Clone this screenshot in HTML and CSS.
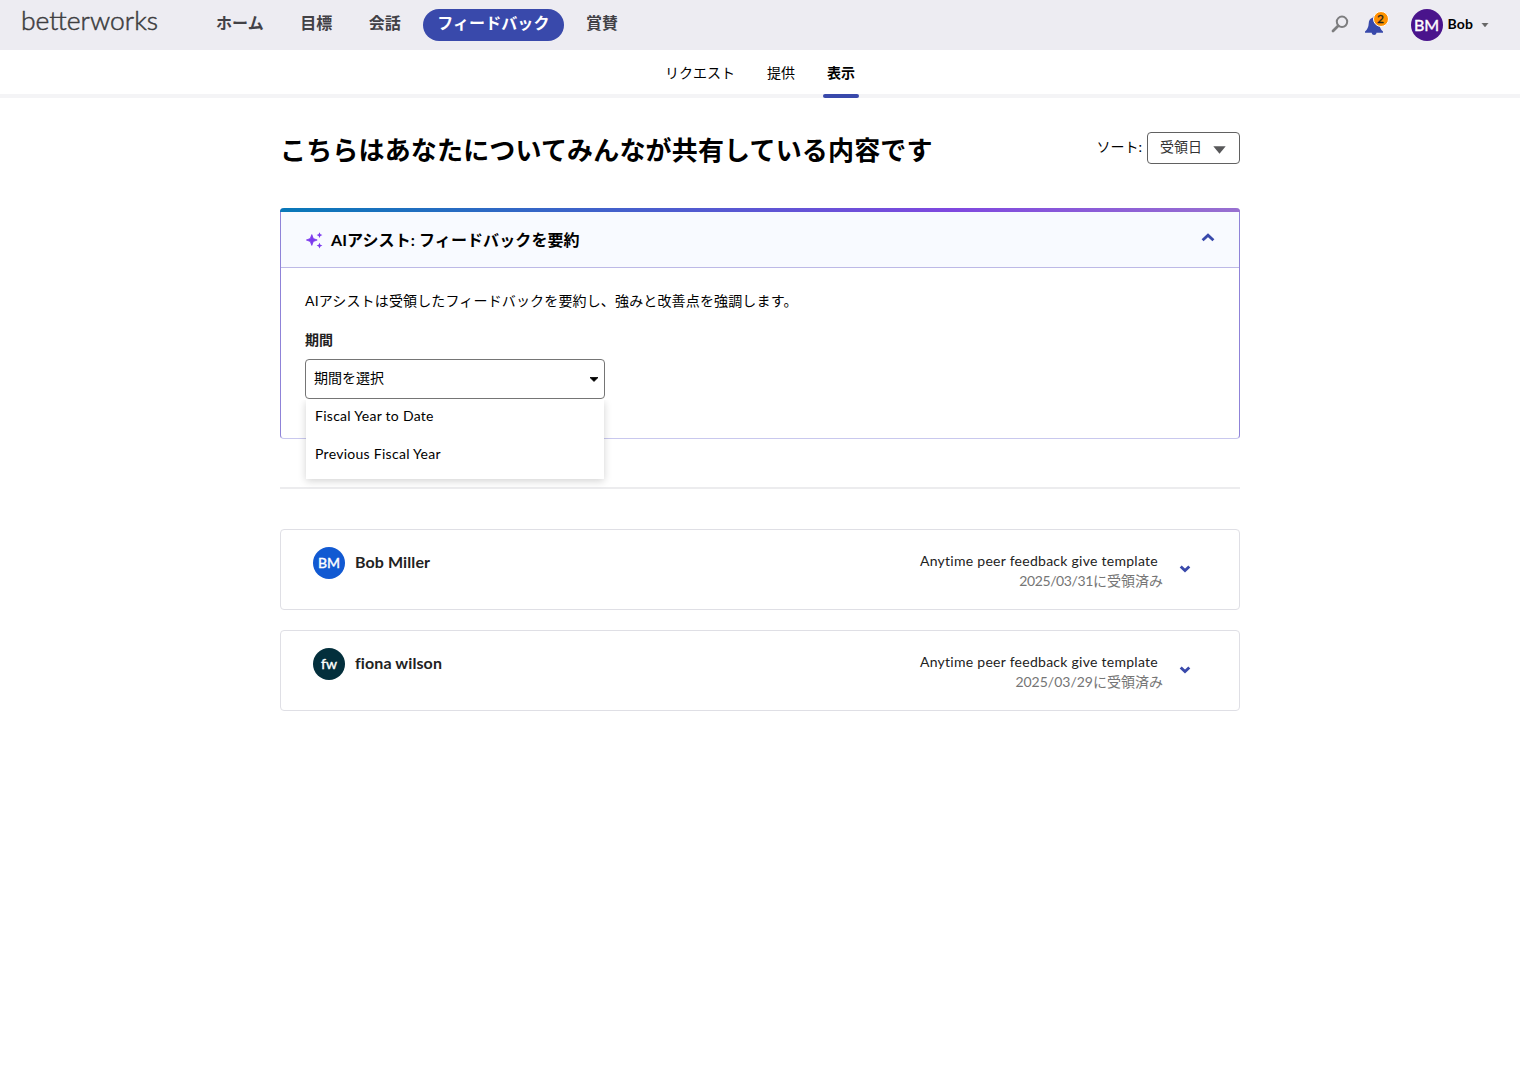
FILE: index.html
```html
<!DOCTYPE html>
<html lang="ja">
<head>
<meta charset="utf-8">
<title>Betterworks</title>
<link rel="stylesheet" href="styles.css">
</head>
<body>
<header class="topbar">
  <svg class="logo" width="144" height="40" viewBox="0 0 144 40"><text x="1" y="30" textLength="137" lengthAdjust="spacingAndGlyphs">betterworks</text></svg>
  <nav class="nav">
    <a>ホーム</a><a>目標</a><a>会話</a><a class="active">フィードバック</a><a>賞賛</a>
  </nav>
  <div class="tools">
    <svg class="search" width="18" height="18" viewBox="0 0 18 18"><circle cx="11" cy="6.8" r="5.2" fill="none" stroke="#7d7d7f" stroke-width="2"/><path d="M7 11 2 16" stroke="#7d7d7f" stroke-width="2.8" stroke-linecap="round"/></svg>
    <div class="bell">
      <svg width="20" height="20" viewBox="0 0 20 20"><path d="M10 .5c-.8 0-1.3.6-1.3 1.3C6 2.500 4.800 4.500 4.700 7.500 4.600 11 3.300 13.500 1 15.500v1.300h6.700c.2 1.400 1.200 2.200 2.400 2.200s2.200-.8 2.400-2.200H19v-1.300c-2.300-2-3.600-4.500-3.700-8C15.200 4.500 14 2.500 11.300 1.800 11.300 1.100 10.800.5 10 .5z" fill="#3949ab"/></svg>
      <span class="badge">2</span>
    </div>
    <span class="avatar avatar-user">BM</span>
    <span class="username">Bob</span>
    <svg class="user-caret" width="8" height="4" viewBox="0 0 8 4"><path d="M.8 0h6.400L4 4z" fill="#666" stroke="#666" stroke-width=".4"/></svg>
  </div>
</header>
<nav class="subnav">
  <a>リクエスト</a><a>提供</a><a class="current">表示</a>
</nav>
<main class="content">
  <div class="heading">
    <h1>こちらはあなたについてみんなが共有している内容です</h1>
    <div class="sort"><span>ソート:</span>
      <button class="sort-button"><span>受領日</span><svg width="13" height="8" viewBox="0 0 13 8"><path d="M.3.300h12.400L6.500 7.700z" fill="#58585a"/></svg></button>
    </div>
  </div>
  <section class="assist">
    <div class="assist-bar"></div>
    <div class="assist-head">
      <svg class="sparkle" width="18" height="18" viewBox="0 0 18 18" fill="#7c3aed"><path d="M6.800 3.600 8.300 7.500 12.200 9 8.300 10.500 6.800 14.400 5.300 10.500 1.400 9 5.300 7.500z" stroke="#7c3aed" stroke-width=".8" stroke-linejoin="round"/><path d="m14.500 1.200.9 2 2 .9-2 .9-.9 2-.9-2-2-.9 2-.9zM14.500 11.700l.9 2 2 .9-2 .9-.9 2-.9-2-2-.9 2-.9z"/></svg>
      <h2>AIアシスト: フィードバックを要約</h2>
      <svg class="chevron-up" width="14" height="9" viewBox="0 0 14 9"><path d="m1.600 7.300 5.400-5 5.400 5" fill="none" stroke="#3949ab" stroke-width="2.900"/></svg>
    </div>
    <div class="assist-body">
      <p>AIアシストは受領したフィードバックを要約し、強みと改善点を強調します。</p>
      <div class="label">期間</div>
      <div class="select">
        <span>期間を選択</span>
        <svg width="10" height="5" viewBox="0 0 10 5"><path d="M1 .500h8L5 4.400z" fill="#000" stroke="#000" stroke-width=".8" stroke-linejoin="round"/></svg>
        <div class="menu"><div>Fiscal Year to Date</div><div>Previous Fiscal Year</div></div>
      </div>
    </div>
  </section>
  <hr>
  <article class="card">
    <span class="avatar avatar-bob">BM</span>
    <h3>Bob Miller</h3>
    <div class="meta"><div class="template">Anytime peer feedback give template</div><div class="date"><span>2025/03/31</span>に受領済み</div></div>
    <svg class="chevron-down" width="12" height="8" viewBox="0 0 12 8"><path d="m1.700 1.500 4.300 4 4.300-4" fill="none" stroke="#3949ab" stroke-width="2.900"/></svg>
  </article>
  <article class="card">
    <span class="avatar avatar-fiona">fw</span>
    <h3>fiona wilson</h3>
    <div class="meta"><div class="template">Anytime peer feedback give template</div><div class="date"><span class="wide">2025/03/29</span>に受領済み</div></div>
    <svg class="chevron-down" width="12" height="8" viewBox="0 0 12 8"><path d="m1.700 1.500 4.300 4 4.300-4" fill="none" stroke="#3949ab" stroke-width="2.900"/></svg>
  </article>
</main>
</body>
</html>
```
FILE: styles.css
```css
* { box-sizing: border-box; }
body { margin: 0; background: #fff; color: #000; font: 14px/20px Lato, "Noto Sans CJK JP", sans-serif; }
h1, h2, h3, p { margin: 0; }
svg { display: block; flex: none; }

.topbar { display: flex; height: 50px; background: #edecf2; color: #424146; }
.logo { margin: 0 0 0 20px; }
.logo text { font: 300 25px Lato, sans-serif; fill: #3d3d3f; stroke: #3d3d3f; stroke-width: .5px; }
.nav { display: flex; gap: 8.400px; margin: 9px 0 0 38px; }
.nav a { height: 32px; padding: 0 14px; border-radius: 16px; font-size: 16px; line-height: 28px; font-weight: 700; letter-spacing: .08px; white-space: nowrap; }
.nav .active { background: #3949ab; color: #fff; }
.tools { display: flex; margin-left: auto; padding-right: 31px; }
.search { margin: 15px 15px 0 0; }
.bell { position: relative; width: 20px; margin: 16px 27px 0 0; }
.badge { position: absolute; left: 9px; top: -5px; width: 16px; height: 16px; border: 1px solid #fff; border-radius: 50%; background: #ff9100; color: #222; font-size: 12px; line-height: 14px; text-align: center; -webkit-text-stroke: .3px #222; }
.avatar { flex: none; width: 32px; height: 32px; border-radius: 50%; color: #fff; font-size: 14px; line-height: 31px; text-align: center; font-weight: 400; -webkit-text-stroke: .4px #fff; }
.avatar-user { margin-top: 9px; background: #4a148c; font-size: 16px; line-height: 32px; }
.username { margin: 14px 8px 0 5px; color: #000; font-weight: 700; letter-spacing: .1px; }
.user-caret { margin-top: 23px; }

.subnav { display: flex; justify-content: center; gap: 24px; height: 48px; border-bottom: 4px solid #f4f4f6; }
.subnav a { height: 48px; padding: 12px 4px 0; line-height: 22px; }
.subnav .current { position: relative; font-weight: 700; }
.current::after { content: ""; position: absolute; left: 0; right: 0; bottom: 0; height: 4px; border-radius: 2px; background: #3949ab; }

.content { width: 960px; margin: 0 auto; padding-top: 34px; }
.heading { display: flex; justify-content: space-between; height: 76px; }
h1 { margin-top: 1px; font-size: 26px; line-height: 34px; letter-spacing: .17px; white-space: nowrap; }
.sort { display: flex; gap: 5px; line-height: 30px; }
.sort-button { display: flex; align-items: center; justify-content: space-between; width: 93px; height: 32px; padding: 0 13px 0 12px; border: 1px solid #616161; border-radius: 4px; background: #fff; color: #333; font: inherit; }
.sort-button span { margin-top: -3px; }
.sort-button svg { margin-top: 3px; }

.assist { height: 231px; border: 1px solid #8f83d8; border-top: 0; border-bottom-color: #c9c8ee; border-radius: 4px; }
.assist-bar { height: 4px; margin: 0 -1px; border-radius: 4px 4px 0 0; background: linear-gradient(90deg, #0878b8, #7f48df 70%, #9870d0); }
.assist-head { display: flex; align-items: center; height: 56px; padding: 0 24px; border-bottom: 1px solid #bdb9e6; background: #f8faff; }
h2 { flex: 1; margin-left: 8px; font-size: 16px; line-height: 24px; letter-spacing: .1px; }
.chevron-up { margin-top: -4px; }
.assist-body { padding: 23px 24px; }
.assist-body p { letter-spacing: .15px; }
.label { margin: 19px 0 9px; font-weight: 700; color: #222; }
.select { position: relative; display: flex; align-items: center; justify-content: space-between; width: 300px; height: 40px; padding: 0 5px 0 8px; border: 1px solid #757575; border-radius: 4px; }
.select > span { margin-top: -2px; }
.menu { position: absolute; left: 0; top: 40px; width: 298px; height: 79px; background: #fff; box-shadow: 0 2px 8px rgba(0,0,0,.18); clip-path: inset(0 -10px -12px); }
.menu div { height: 38px; padding: 6px 9px; letter-spacing: .28px; }
hr { height: 2px; margin: 48px 0 40px; border: 0; background: #ececee; }

.card { display: flex; height: 81px; margin-bottom: 20px; padding: 0 48px 0 32px; border: 1px solid #dfdfe5; border-radius: 4px; color: #222; }
.card .avatar { margin-top: 17px; }
.avatar-bob { background: #1159d2; }
.avatar-fiona { background: #032f3c; }
h3 { margin: 21px 0 0 10px; font-size: 16px; line-height: 21px; letter-spacing: .1px; }
.meta { margin: 21px 16px 0 auto; text-align: right; }
.template { padding-right: 5px; letter-spacing: .27px; }
.date { color: #757575; }
.date span { letter-spacing: -.38px; }
.date .wide { letter-spacing: 0; }
.chevron-down { margin-top: 35px; }
```
